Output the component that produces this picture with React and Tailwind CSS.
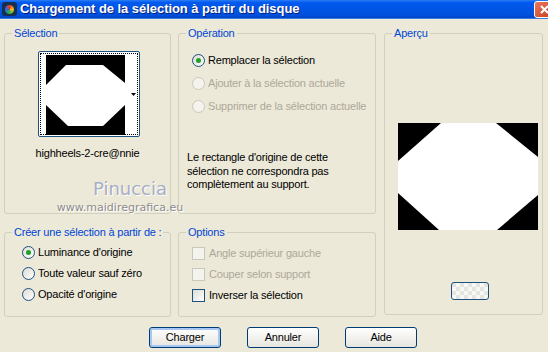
import React from 'react';

const ui = { fontFamily: '"Liberation Sans", Arial, sans-serif' };

function Radio({ checked, disabled, rowClass = 'h-[22px]', children }) {
  return (
    <div className={`flex items-center ${rowClass}`}>
      <span
        className={`w-[13px] h-[13px] rounded-full border flex items-center justify-center ${
          disabled
            ? 'border-[#CAC8BB] bg-[#F4F3EE]'
            : 'border-[#1C5180] bg-linear-to-br from-[#DCDBD4] to-white'
        }`}
      >
        {checked && <span className="w-[5px] h-[5px] rounded-full bg-[#21A121]" />}
      </span>
      <span className={`ml-[3px] ${disabled ? 'text-[#ACA899]' : 'text-black'}`}>{children}</span>
    </div>
  );
}

function Check({ disabled, children }) {
  return (
    <div className="flex items-center h-[21px]">
      <span
        className={`w-[13px] h-[13px] border ${
          disabled
            ? 'border-[#CAC8BB] bg-[#F4F3EE]'
            : 'border-[#1C5180] bg-linear-to-br from-[#DCDBD4] to-white'
        }`}
      />
      <span className={`ml-[4px] ${disabled ? 'text-[#ACA899]' : 'text-black'}`}>{children}</span>
    </div>
  );
}

function Group({ title, className, children }) {
  return (
    <fieldset className={`border border-[#D0D0BF] rounded-[3px] min-w-0 ${className}`}>
      <legend className="ml-[7px] px-[2px] leading-[13px] whitespace-nowrap text-[#0046D5]">{title}</legend>
      {children}
    </fieldset>
  );
}

function XpButton({ children, isDefault }) {
  return (
    <button
      className={`w-[72px] h-[21px] rounded-[3px] border border-[#003C74] bg-linear-to-b from-white to-[#E6E5DE] text-black ${
        isDefault ? 'shadow-[inset_0_0_0_2px_#A8C6F3]' : ''
      }`}
    >
      {children}
    </button>
  );
}

function Octagon({ w, h, points }) {
  return (
    <svg width={w} height={h} viewBox={`0 0 ${w} ${h}`} className="block">
      <rect width={w} height={h} fill="#000" />
      <polygon points={points} fill="#fff" />
    </svg>
  );
}

export default function App() {
  return (
    <div className="w-[548px] h-[352px] bg-[#ECE9D8] overflow-hidden text-[11px] tracking-[-0.2px] relative" style={ui}>
      {/* title bar */}
      <div className="h-[19px] flex items-center bg-[linear-gradient(to_bottom,#2A7CF5_0%,#0058EE_15%,#0054E3_60%,#0050DC_85%,#0044C6_100%)] border-b border-[#3E7BE0]">
        <div className="w-[15px] h-[14px] ml-[2px] rounded-[3px] bg-[#15304F] flex items-center justify-center">
          <span className="w-[9px] h-[9px] rounded-full bg-[conic-gradient(#E53B2C,#F0C419,#2CB34A,#2C6BE5,#E53B2C)]" />
        </div>
        <span className="ml-[3px] text-white font-bold text-[13px] tracking-[-0.05px] [text-shadow:1px_1px_0_#0A1E7A]">
          Chargement de la sélection à partir du disque
        </span>
        <div className="ml-auto w-[21px] h-[17px] mr-[-7px] rounded-[3px] border border-white bg-linear-to-br from-[#E9785C] to-[#C7391C] flex items-center justify-center">
          <svg width="9" height="9" viewBox="0 0 9 9">
            <path d="M1 1 L8 8 M8 1 L1 8" stroke="#fff" strokeWidth="2" />
          </svg>
        </div>
      </div>

      <div className="flex pl-[4px] pt-[8px]">
        <div className="w-[167px] flex flex-col">
          <Group title="Sélection" className="h-[187px]">
            <div className="flex flex-col items-center">
              <div className="mt-[11px] ml-[2px] w-[102px] h-[86px] rounded-[2px] border border-[#1C5180] bg-white p-[1px]">
                <div className="w-full h-full border border-dotted border-black flex pl-[5px] pt-[1px]">
                  <Octagon w={79} h={80} points="20,10 57,10 79,28 79,50 57,71 22,71 0,50 0,30" />
                  <div className="flex-1 flex items-center justify-end pr-[1px]">
                    <svg width="5" height="3" viewBox="0 0 5 3">
                      <path d="M0 0 H5 L2.5 3 Z" fill="#000" />
                    </svg>
                  </div>
                </div>
              </div>
              <div className="mt-[8px] text-black">highheels-2-cre@nnie</div>
            </div>
          </Group>
          <Group title="Créer une sélection à partir de :" className="mt-[12px] h-[91px]">
            <div className="pl-[17px] pt-[3px]">
              <Radio checked rowClass="h-[21px]">Luminance d'origine</Radio>
              <Radio rowClass="h-[21px]">Toute valeur sauf zéro</Radio>
              <Radio rowClass="h-[21px]">Opacité d'origine</Radio>
            </div>
          </Group>
        </div>

        <div className="w-[198px] ml-[7px] flex flex-col">
          <Group title="Opération" className="h-[187px]">
            <div className="pl-[13px] pt-[9px]">
              <Radio checked rowClass="h-[23px]">Remplacer la sélection</Radio>
              <Radio disabled rowClass="h-[23px]">Ajouter à la sélection actuelle</Radio>
              <Radio disabled rowClass="h-[23px]">Supprimer de la sélection actuelle</Radio>
            </div>
            <p className="pl-[8px] mt-[33px] leading-[13.5px] text-black">
              Le rectangle d'origine de cette
              <br />
              sélection ne correspondra pas
              <br />
              complètement au support.
            </p>
          </Group>
          <Group title="Options" className="mt-[12px] h-[91px]">
            <div className="pl-[13px] pt-[4px]">
              <Check disabled>Angle supérieur gauche</Check>
              <Check disabled>Couper selon support</Check>
              <Check>Inverser la sélection</Check>
            </div>
          </Group>
        </div>

        <div className="w-[159px] ml-[8px]">
          <Group title="Aperçu" className="h-[288px]">
            <div className="flex flex-col items-center">
              <div className="mt-[83px] ml-[13px] self-start">
                <Octagon w={140} h={107} points="43,0 98,0 140,34 140,72 99,107 41,107 0,70 0,38" />
              </div>
              <div className="mt-[52px] ml-[12px] w-[38px] h-[18px] rounded-[3px] border border-[#1C5180] bg-[repeating-conic-gradient(#F7F7F5_0_25%,#E4E4E0_0_50%)] bg-[length:8px_8px]" />
            </div>
          </Group>
        </div>
      </div>

      <div className="flex pl-[149px] gap-[26px] mt-[10px]">
        <XpButton isDefault>Charger</XpButton>
        <XpButton>Annuler</XpButton>
        <XpButton>Aide</XpButton>
      </div>

      {/* watermark */}
      <div className="absolute left-[57px] top-[179px] w-[126px] flex flex-col items-center pointer-events-none tracking-normal">
        <span
          className="ml-[20px] text-[18px] leading-[20px] text-[#A7AEC6] [text-shadow:1px_1px_0_#fff]"
          style={{ fontFamily: '"DejaVu Sans", sans-serif' }}
        >
          Pinuccia
        </span>
        <span
          className="mt-[2px] text-[11px] leading-[13px] text-[#8C8C8C] [text-shadow:1px_1px_0_#fff]"
          style={{ fontFamily: '"DejaVu Sans", sans-serif' }}
        >
          www.maidiregrafica.eu
        </span>
      </div>
    </div>
  );
}
